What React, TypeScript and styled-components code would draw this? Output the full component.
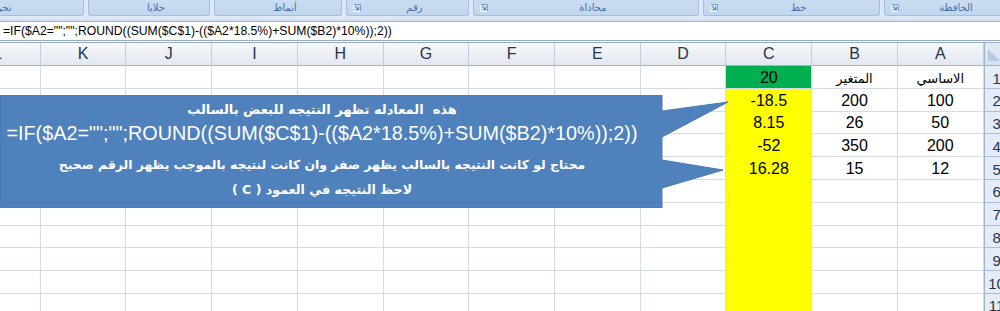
import styled, { createGlobalStyle } from 'styled-components';

const GlobalStyle = createGlobalStyle`
  html, body { margin: 0; padding: 0; background: #ffffff; }
  body { font-family: "Liberation Sans", Arial, sans-serif; }
`;

const COL_W = 85.73;
const COLUMNS = ['L', 'K', 'J', 'I', 'H', 'G', 'F', 'E', 'D', 'C', 'B', 'A'];
const FORMULA = '=IF($A2="";"";ROUND((SUM($C$1)-(($A2*18.5%)+SUM($B2)*10%));2))';

const groups = [
  { label: 'تحرير', width: 168, launcher: false },
  { label: 'خلايا', width: 122, launcher: false },
  { label: 'أنماط', width: 128, launcher: false },
  { label: 'رقم', width: 123, launcher: true },
  { label: 'محاذاة', width: 226, launcher: true },
  { label: 'خط', width: 177, launcher: true },
  { label: 'الحافظة', width: 130, launcher: true },
];

// values by row, keyed by column letter
const cells: Record<number, Record<string, string>> = {
  1: { C: '20', B: 'المتغير', A: 'الاساسي' },
  2: { C: '-18.5', B: '200', A: '100' },
  3: { C: '8.15', B: '26', A: '50' },
  4: { C: '-52', B: '350', A: '200' },
  5: { C: '16.28', B: '15', A: '12' },
};

const rows = Array.from({ length: 12 }, (_, i) => i + 1);
const isArabic = (s: string) => /[\u0600-\u06ff]/.test(s);

const Launcher = () => (
  <svg width="8" height="8" viewBox="0 0 8 8">
    <path d="M0.5 0.5h7v7" fill="none" stroke="#7d9cc6" strokeWidth="1" />
    <path d="M0.5 0.5v7h7" fill="none" stroke="#ffffff" strokeWidth="1" opacity="0.8" />
    <path d="M2 2l3.5 3.5M5.5 3v2.5H3" fill="none" stroke="#5b7fae" strokeWidth="1" />
  </svg>
);

const App = () => (
  <Page>
    <GlobalStyle />
    <Ribbon>
      {groups.map((g, i) => (
        <Group key={g.label} $width={g.width} $first={i === 0}>
          <LaunchSlot>{g.launcher && <Launcher />}</LaunchSlot>
          <GroupLabel>{g.label}</GroupLabel>
        </Group>
      ))}
    </Ribbon>
    <Band />
    <FormulaBar>{FORMULA}</FormulaBar>
    <Sheet>
      {COLUMNS.map((c) => (
        <ColHeader key={c}>{c}</ColHeader>
      ))}
      <Corner>
        <svg width="12" height="12" viewBox="0 0 12 12">
          <path d="M0 0L12 12H0Z" fill="#b7cae3" />
        </svg>
      </Corner>
      {rows.map((r) => (
        <>
          {COLUMNS.map((c) => {
            const fill = c === 'C' ? (r === 1 ? 'green' : 'yellow') : 'none';
            const value = cells[r]?.[c] ?? '';
            return (
              <Cell key={`${c}${r}`} $fill={fill} $tall={r === 1} $arabic={isArabic(value)}>
                {value}
              </Cell>
            );
          })}
          <RowHeader key={`h${r}`} $tall={r === 1}>
            {r}
          </RowHeader>
        </>
      ))}
    </Sheet>

    <Callout>
      <svg width="730" height="113" viewBox="0 0 730 113">
        <path
          d="M0 0H662V16L728 7L662 42V65L723 75L662 93V113H0Z"
          fill="#4f81bd"
          stroke="#4a7ab3"
          strokeWidth="1"
        />
      </svg>
      <CalloutText>
        <Line dir="rtl" $size={13} $lh={22} $top={4} $bold>
          هذه&nbsp; المعادله تظهر النتيجه للبعض بالسالب
        </Line>
        <Line dir="ltr" $size={19.8} $lh={24} $top={0}>
          {FORMULA}
        </Line>
        <Line dir="rtl" $size={12.4} $lh={22} $top={9} $bold>
          محتاج لو كانت النتيجه بالسالب يظهر صفر وان كانت لنتيجه بالموجب يظهر الرقم صحيح
        </Line>
        <Line dir="rtl" $size={12.6} $lh={22} $top={3} $bold>
          لاحظ النتيجه في العمود ( C )
        </Line>
      </CalloutText>
    </Callout>
  </Page>
);

export default App;

const Page = styled.div`
  position: relative;
  width: 1000px;
  height: 311px;
  overflow: hidden;
  background: #ffffff;
`;

const Ribbon = styled.div`
  display: flex;
  gap: 4px;
  height: 16px;
  background: #dce8f6;
`;

const Group = styled.div<{ $width: number; $first: boolean }>`
  flex: 0 0 ${(p) => p.$width}px;
  margin-left: ${(p) => (p.$first ? -84 : 0)}px;
  display: grid;
  grid-template-columns: ${(p) => (p.$first ? 0 : 14)}px 1fr;
  align-items: center;
  box-sizing: border-box;
  height: 16px;
  background: linear-gradient(#cadcf1, #c2d6ee);
  border: 1px solid #a3bede;
  border-top: none;
  border-radius: 0 0 3px 3px;
`;

const LaunchSlot = styled.div`
  display: flex;
  align-items: center;
  justify-content: flex-end;
  height: 100%;
  padding-top: 1px;
`;

const GroupLabel = styled.div`
  text-align: center;
  font-family: "DejaVu Sans", sans-serif;
  font-size: 10px;
  color: #4a6fa5;
  line-height: 15px;
  white-space: nowrap;
`;

const Band = styled.div`
  height: 5px;
  background: linear-gradient(#dfeaf7, #d3e1f2);
  border-bottom: 1px solid #9fb5d0;
`;

const FormulaBar = styled.div`
  height: 18px;
  padding-left: 3px;
  font-family: "Liberation Sans", Arial, sans-serif;
  font-size: 12.2px;
  line-height: 19px;
  color: #000000;
  background: #ffffff;
  border-bottom: 3px double #98abc4;
  white-space: nowrap;
`;

const Sheet = styled.div`
  display: grid;
  grid-template-columns: repeat(12, ${COL_W}px) 25px;
  grid-auto-rows: 22.8px;
  grid-template-rows: 23px;
  margin-left: -45px;
  width: max-content;
`;

const ColHeader = styled.div`
  display: flex;
  align-items: center;
  justify-content: center;
  box-sizing: border-box;
  font-size: 16px;
  color: #27344a;
  background: linear-gradient(#f6f8fb, #e2e8f1);
  border-right: 1px solid #c3cfdf;
  border-bottom: 1px solid #9fb3cc;
`;

const Corner = styled.div`
  box-sizing: border-box;
  background: linear-gradient(#e3ebf6, #d3dfef);
  border-bottom: 1px solid #9fb3cc;
  border-left: 1px solid #9fb3cc;
  padding: 4px 0 0 3px;
`;

const fills: Record<string, string> = {
  none: '#ffffff',
  yellow: '#ffff00',
  green: '#00b050',
};

const Cell = styled.div<{ $fill: string; $tall: boolean; $arabic: boolean }>`
  display: flex;
  align-items: center;
  justify-content: center;
  box-sizing: border-box;
  height: ${(p) => (p.$tall ? 23 : 22.8)}px;
  font-size: ${(p) => (p.$arabic ? 13 : 16)}px;
  color: #000000;
  font-family: ${(p) => (p.$arabic ? '"DejaVu Sans", sans-serif' : '"Liberation Sans", Arial, sans-serif')};
  background: ${(p) => fills[p.$fill]};
  border-right: 1px solid #d4dbe8;
  border-bottom: 1px solid ${(p) => (p.$fill === 'yellow' ? '#ffff00' : '#d4dbe8')};
  padding-top: 2px;
`;

const RowHeader = styled.div<{ $tall: boolean }>`
  display: flex;
  align-items: center;
  justify-content: center;
  box-sizing: border-box;
  height: ${(p) => (p.$tall ? 23 : 22.8)}px;
  font-size: 15px;
  color: #27344a;
  background: #e4ecf7;
  border-left: 1px solid #9fb3cc;
  border-bottom: 1px solid #a9bcd4;
  padding-top: 2px;
`;

const Callout = styled.div`
  position: absolute;
  left: 0;
  top: 95px;
  width: 730px;
  height: 113px;
  svg {
    position: absolute;
    left: 0;
    top: 0;
  }
`;

const CalloutText = styled.div`
  position: relative;
  width: 644px;
  display: flex;
  flex-direction: column;
  align-items: center;
  color: #ffffff;
`;

const Line = styled.div<{ $size: number; $lh: number; $top: number; $bold?: boolean }>`
  margin-top: ${(p) => p.$top}px;
  font-family: ${(p) => (p.$bold ? '"DejaVu Sans", sans-serif' : '"Liberation Sans", Arial, sans-serif')};
  font-size: ${(p) => p.$size}px;
  font-weight: ${(p) => (p.$bold ? 700 : 400)};
  line-height: ${(p) => p.$lh}px;
  white-space: nowrap;
`;
